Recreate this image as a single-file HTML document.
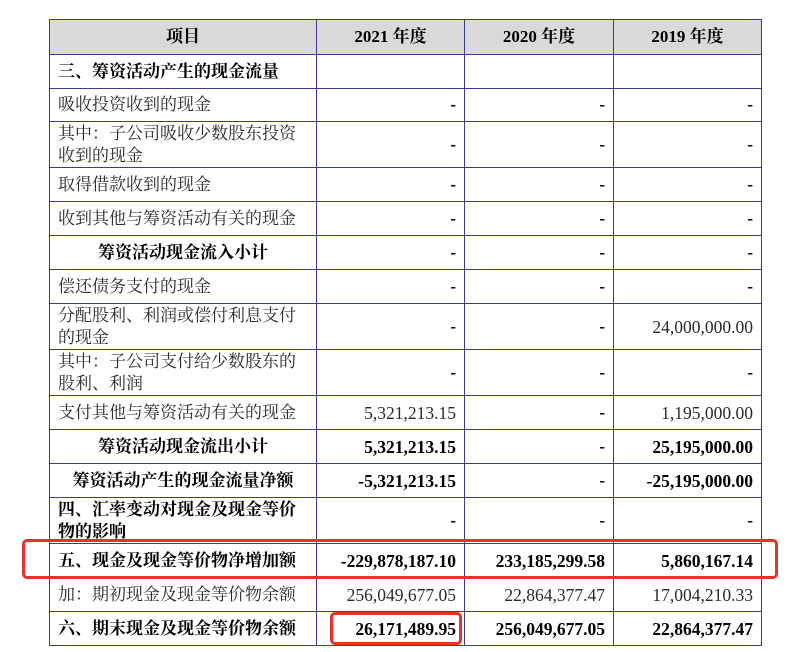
<!DOCTYPE html>
<html><head><meta charset="utf-8"><style>
body{margin:0;width:800px;height:652px;background:#fff;position:relative;overflow:hidden;font-family:"Liberation Serif","Noto Serif CJK SC",serif;}
table{position:absolute;left:49px;top:19px;border-collapse:collapse;table-layout:fixed;}
td{border:1.5px solid #3a3a9a;font-size:17px;color:#2a2a2a;padding:0 8px;line-height:22px;}
td.n{text-align:right;padding-right:8px;font-family:"Liberation Serif",serif;font-size:17.5px;}
td.d{text-align:right;padding-right:8px;font-weight:bold;color:#000;}
.b td{font-weight:bold;color:#000;}
.h td{background:#d9d9d9;font-weight:bold;color:#000;text-align:center;}
.c{text-align:center!important;}
.red{position:absolute;border:3px solid #e8312a;border-radius:5px;}
</style></head><body>
<table>
<colgroup><col style="width:267px"><col style="width:148px"><col style="width:149px"><col style="width:148px"></colgroup>
<tr class="h" style="height:35px"><td>项目</td><td>2021 年度</td><td>2020 年度</td><td>2019 年度</td></tr>
<tr class="b" style="height:34px"><td>三、筹资活动产生的现金流量</td><td></td><td></td><td></td></tr>
<tr style="height:33px"><td>吸收投资收到的现金</td><td class="d">-</td><td class="d">-</td><td class="d">-</td></tr>
<tr style="height:46px"><td>其中：子公司吸收少数股东投资收到的现金</td><td class="d">-</td><td class="d">-</td><td class="d">-</td></tr>
<tr style="height:34px"><td>取得借款收到的现金</td><td class="d">-</td><td class="d">-</td><td class="d">-</td></tr>
<tr style="height:34px"><td>收到其他与筹资活动有关的现金</td><td class="d">-</td><td class="d">-</td><td class="d">-</td></tr>
<tr class="b" style="height:34px"><td class="c">筹资活动现金流入小计</td><td class="d">-</td><td class="d">-</td><td class="d">-</td></tr>
<tr style="height:34px"><td>偿还债务支付的现金</td><td class="d">-</td><td class="d">-</td><td class="d">-</td></tr>
<tr style="height:46px"><td>分配股利、利润或偿付利息支付的现金</td><td class="d">-</td><td class="d">-</td><td class="n">24,000,000.00</td></tr>
<tr style="height:46px"><td>其中：子公司支付给少数股东的股利、利润</td><td class="d">-</td><td class="d">-</td><td class="d">-</td></tr>
<tr style="height:34px"><td>支付其他与筹资活动有关的现金</td><td class="n">5,321,213.15</td><td class="d">-</td><td class="n">1,195,000.00</td></tr>
<tr class="b" style="height:34px"><td class="c">筹资活动现金流出小计</td><td class="n">5,321,213.15</td><td class="d">-</td><td class="n">25,195,000.00</td></tr>
<tr class="b" style="height:34px"><td class="c">筹资活动产生的现金流量净额</td><td class="n">-5,321,213.15</td><td class="d">-</td><td class="n">-25,195,000.00</td></tr>
<tr class="b" style="height:46px"><td>四、汇率变动对现金及现金等价物的影响</td><td class="d">-</td><td class="d">-</td><td class="d">-</td></tr>
<tr class="b" style="height:34px"><td>五、现金及现金等价物净增加额</td><td class="n">-229,878,187.10</td><td class="n">233,185,299.58</td><td class="n">5,860,167.14</td></tr>
<tr style="height:34px"><td>加：期初现金及现金等价物余额</td><td class="n">256,049,677.05</td><td class="n">22,864,377.47</td><td class="n">17,004,210.33</td></tr>
<tr class="b" style="height:34px"><td>六、期末现金及现金等价物余额</td><td class="n">26,171,489.95</td><td class="n">256,049,677.05</td><td class="n">22,864,377.47</td></tr>
</table>
<div class="red" style="left:22px;top:539px;width:750px;height:34px"></div>
<div class="red" style="left:330px;top:612px;width:126px;height:27px"></div>
</body></html>
